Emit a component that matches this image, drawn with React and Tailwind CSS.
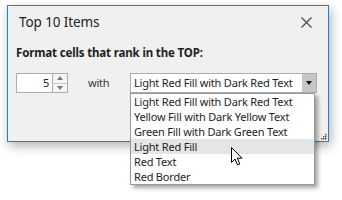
import React from "react";

const options = [
  "Light Red Fill with Dark Red Text",
  "Yellow Fill with Dark Yellow Text",
  "Green Fill with Dark Green Text",
  "Light Red Fill",
  "Red Text",
  "Red Border",
];

function Grip() {
  const dots = [
    [4, 0],
    [2, 2],
    [4, 2],
    [0, 4],
    [2, 4],
    [4, 4],
  ];
  return (
    <svg width="6" height="6" viewBox="0 0 6 6" className="absolute right-[1px] bottom-[1px]">
      {dots.map(([x, y], i) => (
        <rect key={i} x={x} y={y} width="1.5" height="1.5" fill="#5a5a5a" />
      ))}
    </svg>
  );
}

function Cursor() {
  return (
    <svg width="13" height="20" viewBox="0 0 13 20" className="absolute left-[231px] top-[147px]">
      <path
        d="M0.5 0.5 L0.5 15.5 L4 12 L6.5 18 L8.8 17 L6.3 11.2 L11 11.2 Z"
        fill="#fff"
        stroke="#000"
        strokeWidth="1"
        strokeLinejoin="miter"
      />
    </svg>
  );
}

export default function App() {
  return (
    <div
      className="relative w-[342px] h-[200px] bg-white overflow-hidden text-[11px] tracking-[-0.2px] text-[#1e1e1e]"
      style={{ fontFamily: '"Noto Sans", "Open Sans", sans-serif' }}
    >
      {/* dialog window */}
      <div className="absolute left-[7px] top-[5px] w-[322px] h-[137px] border border-[#1883d7] bg-[#f0f0f0] shadow-[2px_4px_10px_rgba(0,0,0,0.3)]">
        <div className="flex items-center justify-between h-[33px] pl-[11px] pr-[16px]">
          <span className="text-[13.5px] text-[#222] tracking-[-0.1px]">Top 10 Items</span>
          <svg width="11" height="11" viewBox="0 0 11 11">
            <path d="M0.5 0.5 L10.5 10.5 M10.5 0.5 L0.5 10.5" stroke="#444" strokeWidth="1.1" />
          </svg>
        </div>
        <div className="pl-[8px] pt-[5px] h-[28px] font-bold text-[11.5px] tracking-[-0.15px] text-[#222]">
          Format cells that rank in the TOP:
        </div>
        <div className="flex items-center pl-[8px] pt-[6px]">
          <div className="flex w-[52px] h-[20px] border border-[#adadad] bg-white">
            <div className="flex-1 text-right pr-[3px] leading-[18px]">5</div>
            <div className="flex flex-col w-[15px] border-l border-[#adadad]">
              <div className="flex-1 flex items-center justify-center bg-[#f5f5f5] border-b border-[#c8c8c8]">
                <div className="w-0 h-0 border-l-[3.5px] border-r-[3.5px] border-b-[4px] border-l-transparent border-r-transparent border-b-[#777]" />
              </div>
              <div className="flex-1 flex items-center justify-center bg-[#f5f5f5]">
                <div className="w-0 h-0 border-l-[3.5px] border-r-[3.5px] border-t-[4px] border-l-transparent border-r-transparent border-t-[#777]" />
              </div>
            </div>
          </div>
          <span className="ml-[20px] w-[42px] text-[#333]">with</span>
          <div className="relative flex w-[187px] h-[20px] border border-[#adadad] bg-white">
            <div className="flex-1 pl-[3px] leading-[18px] whitespace-nowrap overflow-hidden">Light Red Fill with Dark Red Text</div>
            <div className="w-[14px] flex items-center justify-center bg-[#c6c6c6]">
              <div className="w-0 h-0 border-l-[3.5px] border-r-[3.5px] border-t-[4px] border-l-transparent border-r-transparent border-t-[#111]" />
            </div>
          </div>
        </div>
        <Grip />
      </div>

      {/* dropdown list */}
      <div className="absolute left-[130px] top-[93px] w-[185px] border border-[#999] bg-white shadow-[3px_3px_4px_rgba(0,0,0,0.35)]">
        {options.map((o, i) => (
          <div
            key={o}
            className={`h-[15px] leading-[15px] pl-[3px] whitespace-nowrap ${i === 3 ? "bg-[#e5e5e5]" : ""}`}
          >
            {o}
          </div>
        ))}
      </div>

      <Cursor />
    </div>
  );
}
